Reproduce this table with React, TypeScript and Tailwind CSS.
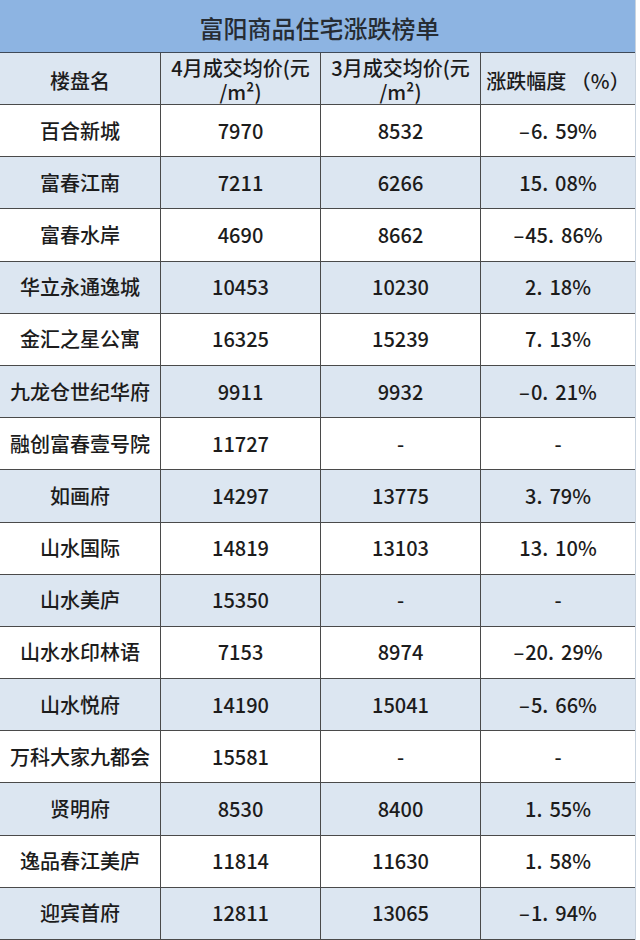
import React from "react";

interface Row {
    name: string;
    april: string;
    march: string;
    change: string;
}

const rows: Row[] = [
    { name: "百合新城", april: "7970", march: "8532", change: "-6.59%" },
    { name: "富春江南", april: "7211", march: "6266", change: "15.08%" },
    { name: "富春水岸", april: "4690", march: "8662", change: "-45.86%" },
    { name: "华立永通逸城", april: "10453", march: "10230", change: "2.18%" },
    { name: "金汇之星公寓", april: "16325", march: "15239", change: "7.13%" },
    { name: "九龙仓世纪华府", april: "9911", march: "9932", change: "-0.21%" },
    { name: "融创富春壹号院", april: "11727", march: "-", change: "-" },
    { name: "如画府", april: "14297", march: "13775", change: "3.79%" },
    { name: "山水国际", april: "14819", march: "13103", change: "13.10%" },
    { name: "山水美庐", april: "15350", march: "-", change: "-" },
    { name: "山水水印林语", april: "7153", march: "8974", change: "-20.29%" },
    { name: "山水悦府", april: "14190", march: "15041", change: "-5.66%" },
    { name: "万科大家九都会", april: "15581", march: "-", change: "-" },
    { name: "贤明府", april: "8530", march: "8400", change: "1.55%" },
    { name: "逸品春江美庐", april: "11814", march: "11630", change: "1.58%" },
    { name: "迎宾首府", april: "12811", march: "13065", change: "-1.94%" },
];

function Percent({ value }: { value: string }) {
    if (value === "-") return <span>-</span>;
    const neg = value.startsWith("-");
    const body = neg ? value.slice(1) : value;
    const [int, dec] = body.split(".");
    return (
        <span>
            {neg && <span className="mr-[1px]">–</span>}
            {int}
            <span className="mr-[7px]">.</span>
            {dec}
        </span>
    );
}

const cell = "flex items-center justify-center border-r border-[#4a4a4a]";

export default function App() {
    return (
        <div className="w-[640px] h-[940px] bg-white font-['Noto_Sans_CJK_SC',sans-serif] font-medium text-[#1c1c1c]">
            <div className="w-[636px] h-[940px] flex flex-col border-r border-[#c9d3de]">
                <div className="h-[53px] shrink-0 bg-[#8db4e2] border-b border-[#3f4a58] flex items-center justify-center text-[24px] text-[#262c33] pl-[4px] pt-[3px]">
                    富阳商品住宅涨跌榜单
                </div>
                <div className="h-[52px] shrink-0 bg-[#dce6f1] border-b border-[#4a4a4a] grid grid-cols-[161px_160px_160px_1fr] text-[20px]">
                    <div className={cell + " pt-[5px]"}>楼盘名</div>
                    <div className="border-r border-[#4a4a4a] pt-[3px] leading-[24px] text-center whitespace-nowrap">
                        4月成交均价(元<br />/m²)
                    </div>
                    <div className="border-r border-[#4a4a4a] pt-[3px] leading-[24px] text-center whitespace-nowrap">
                        3月成交均价(元<br />/m²)
                    </div>
                    <div className="flex items-center justify-center pt-[5px] whitespace-nowrap">涨跌幅度 （%）</div>
                </div>
                <div className="flex-1 grid grid-rows-16">
                    {rows.map((r, i) => (
                        <div
                            key={r.name}
                            className={
                                "grid grid-cols-[161px_160px_160px_1fr] border-b border-[#4a4a4a] text-[20px] " +
                                (i % 2 === 0 ? "bg-white" : "bg-[#dce6f1]")
                            }
                        >
                            <div className={cell + " whitespace-nowrap"}>{r.name}</div>
                            <div className={cell}>{r.april}</div>
                            <div className={cell}>{r.march}</div>
                            <div className="flex items-center justify-center">
                                <Percent value={r.change} />
                            </div>
                        </div>
                    ))}
                </div>
            </div>
        </div>
    );
}
